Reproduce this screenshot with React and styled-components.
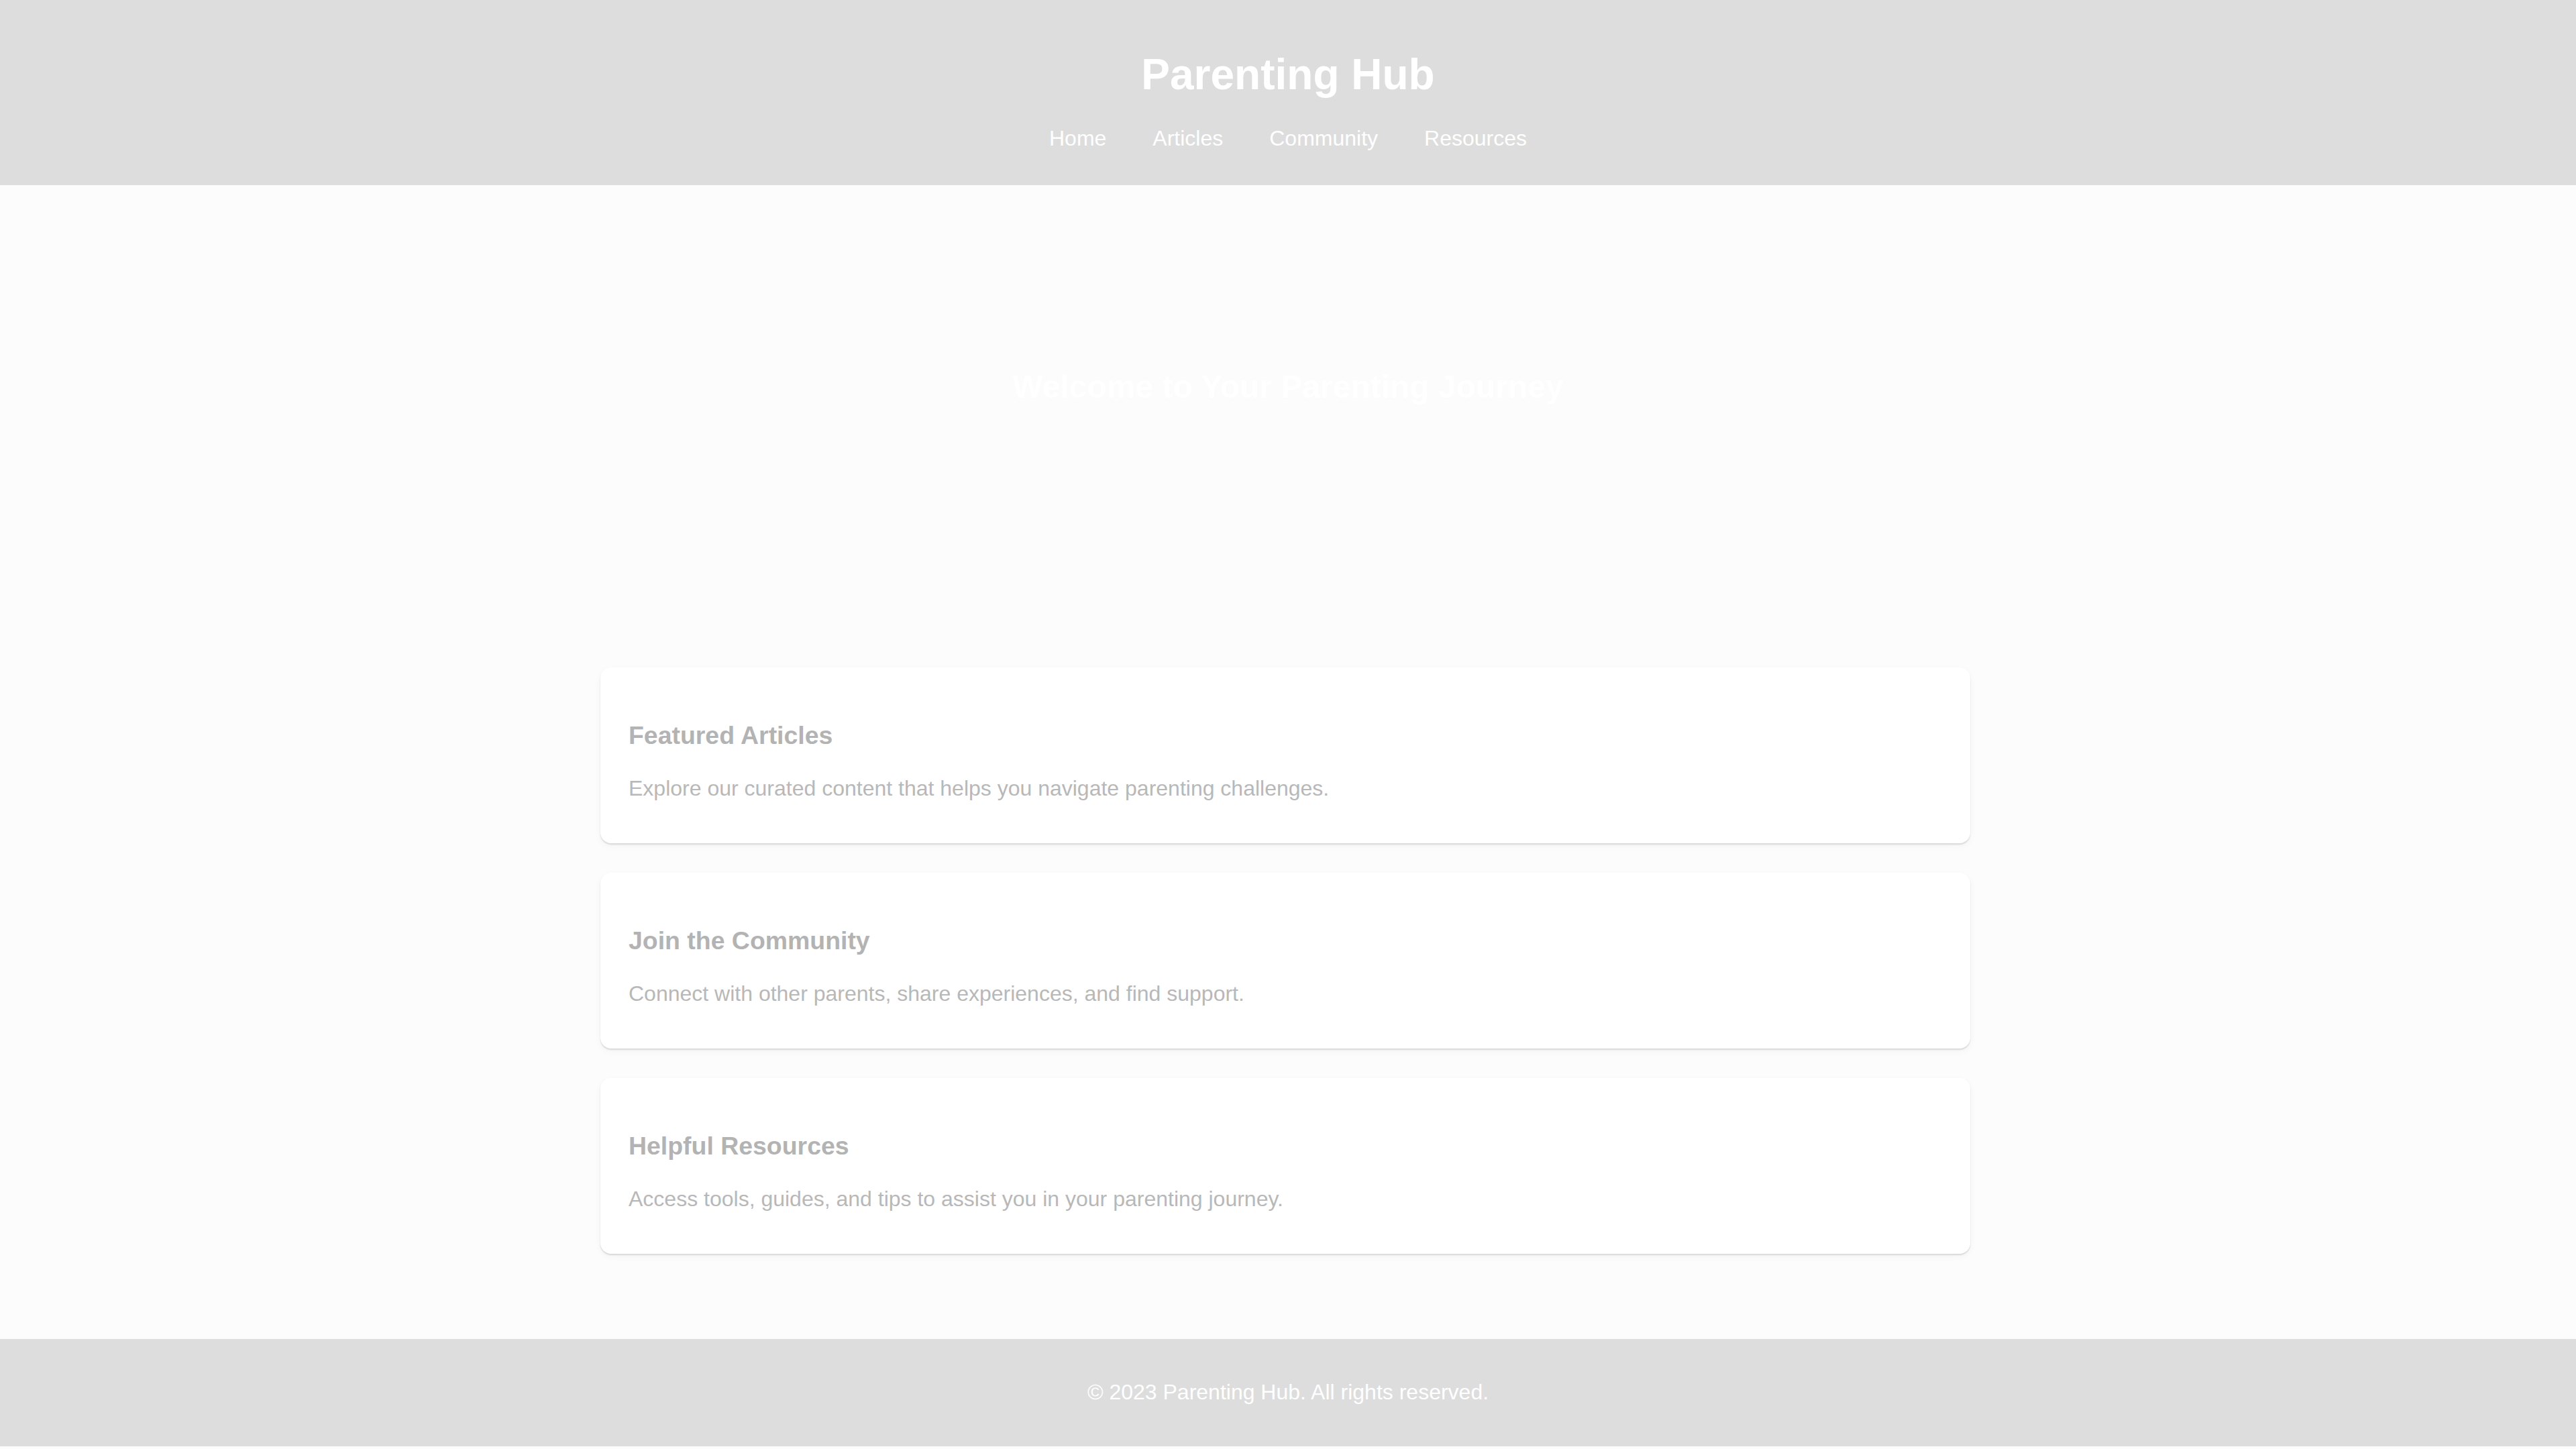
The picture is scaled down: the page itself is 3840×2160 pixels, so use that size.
import React from "react"
import styled, { createGlobalStyle } from "styled-components"

const GlobalStyle = createGlobalStyle`
  html, body {
    margin: 0;
    padding: 0;
    background-color: #fcfcfc;
    font-family: "Liberation Sans", Arial, sans-serif;
  }
`

const StyledHeader = styled.header`
  background-color: #dddddd;
  color: #ffffff;
  text-align: center;
  padding: 74px 0 51px;
`

const StyledSiteTitle = styled.h1`
  margin: 0 0 40px;
  font-size: 64px;
  font-weight: 700;
  line-height: normal;
`

const StyledNav = styled.nav`
  display: flex;
  justify-content: center;
  gap: 69px;
`

const StyledNavLink = styled.a`
  color: #ffffff;
  font-size: 32px;
  line-height: normal;
  text-decoration: none;
`

const StyledHero = styled.section`
  height: 600px;
  display: flex;
  align-items: center;
  justify-content: center;
`

const StyledHeroTitle = styled.h2`
  margin: 0;
  color: #ffffff;
  font-size: 48px;
  font-weight: 700;
  line-height: normal;
`

const StyledMain = styled.main`
  display: flex;
  flex-direction: column;
  gap: 44px;
  width: 2042px;
  margin: 0 0 0 calc(50% - 1025px);
  padding: 119px 0 127px;
  box-sizing: border-box;
`

const StyledCard = styled.article`
  background-color: #ffffff;
  border-radius: 16px;
  padding: 80px 42px 63px;
  box-shadow: 0 2px 2px rgba(0, 0, 0, 0.12), 0 4px 12px rgba(0, 0, 0, 0.04);
`

const StyledCardTitle = styled.h3`
  margin: 0 0 39px;
  color: #b3b3b3;
  font-size: 37.44px;
  font-weight: 700;
  line-height: normal;
`

const StyledCardText = styled.p`
  margin: 0;
  color: #b8b8b8;
  font-size: 32px;
  line-height: normal;
`

const StyledFooter = styled.footer`
  background-color: #dddddd;
  color: #ffffff;
  text-align: center;
  padding: 61px 0 62px;
`

const StyledFooterText = styled.p`
  margin: 0;
  font-size: 32px;
  line-height: normal;
`

const navItems = ["Home", "Articles", "Community", "Resources"]

const cards = [
  {
    title: "Featured Articles",
    text: "Explore our curated content that helps you navigate parenting challenges.",
  },
  {
    title: "Join the Community",
    text: "Connect with other parents, share experiences, and find support.",
  },
  {
    title: "Helpful Resources",
    text: "Access tools, guides, and tips to assist you in your parenting journey.",
  },
]

export default function App() {
  return (
    <>
      <GlobalStyle />
      <StyledHeader>
        <StyledSiteTitle>Parenting Hub</StyledSiteTitle>
        <StyledNav>
          {navItems.map(item => (
            <StyledNavLink key={item} href="#">{item}</StyledNavLink>
          ))}
        </StyledNav>
      </StyledHeader>
      <StyledHero>
        <StyledHeroTitle>Welcome to Your Parenting Journey</StyledHeroTitle>
      </StyledHero>
      <StyledMain>
        {cards.map(card => (
          <StyledCard key={card.title}>
            <StyledCardTitle>{card.title}</StyledCardTitle>
            <StyledCardText>{card.text}</StyledCardText>
          </StyledCard>
        ))}
      </StyledMain>
      <StyledFooter>
        <StyledFooterText>© 2023 Parenting Hub. All rights reserved.</StyledFooterText>
      </StyledFooter>
    </>
  )
}
